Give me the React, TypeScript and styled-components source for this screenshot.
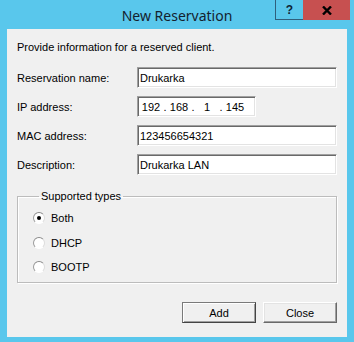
import React from "react";
import styled, { createGlobalStyle } from "styled-components";

const GlobalStyle = createGlobalStyle`
    html, body {
        margin: 0;
        padding: 0;
        background: #59c7ec;
    }
`;

const Window = styled.div`
    display: flex;
    flex-direction: column;
    width: 354px;
    height: 342px;
    background: #59c7ec;
    font-family: "Liberation Sans", Arial, sans-serif;
    font-size: 11px;
    color: #000;
`;

const TitleBar = styled.div`
    display: grid;
    grid-template-columns: 1fr auto 1fr;
    height: 29px;
`;

const Title = styled.div`
    grid-column: 2;
    align-self: center;
    padding-top: 1px;
    font-family: "Noto Sans", "Open Sans", sans-serif;
    font-size: 14px;
    color: #14222f;
`;

const Controls = styled.div`
    grid-column: 3;
    justify-self: end;
    display: flex;
    height: 20px;
    margin-right: 4px;
`;

const HelpButton = styled.div`
    display: flex;
    align-items: center;
    justify-content: center;
    width: 27px;
    border: 1px solid #2f5f7c;
    border-top: none;
    border-right: none;
    font-weight: bold;
    font-size: 12px;
    color: #0e2436;
`;

const CloseButton = styled.div`
    display: flex;
    align-items: center;
    justify-content: center;
    width: 47px;
    background: #c75050;
`;

const Client = styled.div`
    display: flex;
    flex-direction: column;
    flex: 1;
    margin: 0 7px 5px 7px;
    padding: 12px 10px 0 10px;
    background: #f0f0f0;
`;

const Intro = styled.div`
    line-height: 13px;
`;

const Fields = styled.div`
    display: grid;
    grid-template-columns: 120px 1fr;
    row-gap: 8px;
    margin-top: 13px;
`;

const Label = styled.div`
    display: flex;
    align-items: center;
    height: 21px;
`;

const Input = styled.div<{ $width?: number }>`
    display: flex;
    align-items: center;
    box-sizing: border-box;
    width: ${(p) => (p.$width ? `${p.$width}px` : "100%")};
    height: 21px;
    padding-left: 2px;
    background: #fff;
    border: 1px solid;
    border-color: #a0a0a0 #fff #fff #a0a0a0;
    box-shadow: inset 1px 1px 0 #696969, inset -1px -1px 0 #e3e3e3;
`;

const Octet = styled.span`
    width: 22px;
    text-align: center;
`;

const Dot = styled.span`
    width: 6px;
    text-align: center;
`;

const GroupBox = styled.fieldset`
    margin: 15px 0 0 0;
    padding: 7px 0 7px 15px;
    border: 1px solid #bcbcbc;
    box-shadow: 1px 1px 0 #fff, inset 1px 1px 0 #fff;
    display: flex;
    flex-direction: column;
    gap: 8.5px;
`;

const Legend = styled.legend`
    margin-left: 6px;
    padding: 0 2px;
    line-height: 13px;
`;

const RadioRow = styled.label`
    display: flex;
    align-items: center;
    gap: 6px;
    height: 16px;
`;

const RadioCircle = styled.span<{ $checked?: boolean }>`
    display: flex;
    align-items: center;
    justify-content: center;
    box-sizing: border-box;
    width: 12px;
    height: 12px;
    border-radius: 50%;
    border: 1px solid;
    border-color: #8a8a8a #dcdcdc #ffffff #9a9a9a;
    background: #fff;

    &::after {
        content: "";
        display: ${(p) => (p.$checked ? "block" : "none")};
        width: 4px;
        height: 4px;
        border-radius: 50%;
        background: #000;
    }
`;

const ButtonRow = styled.div`
    display: flex;
    justify-content: flex-end;
    gap: 7px;
    margin-top: 19px;
`;

const Button = styled.button<{ $default?: boolean }>`
    box-sizing: border-box;
    width: 74px;
    height: 21px;
    padding: 0;
    font-family: "Liberation Sans", Arial, sans-serif;
    font-size: 11px;
    color: #000;
    background: #f0f0f0;
    border: 1px solid;
    border-color: ${(p) => (p.$default ? "#7a7a7a #444 #444 #7a7a7a" : "#fff #696969 #696969 #fff")};
    box-shadow: ${(p) =>
        p.$default
            ? "inset 1px 1px 0 #fff, inset -1px -1px 0 #a0a0a0"
            : "inset -1px -1px 0 #a0a0a0, inset 1px 1px 0 #e3e3e3"};
`;

const types = ["Both", "DHCP", "BOOTP"];

const App: React.FC = () => {
    return (
        <Window>
            <GlobalStyle />
            <TitleBar>
                <Title>New Reservation</Title>
                <Controls>
                    <HelpButton>?</HelpButton>
                    <CloseButton>
                        <svg width="10" height="9" viewBox="0 0 10 9">
                            <path d="M1 0.5 L9 8.5 M9 0.5 L1 8.5" stroke="#000" strokeWidth="2.4" />
                        </svg>
                    </CloseButton>
                </Controls>
            </TitleBar>
            <Client>
                <Intro>Provide information for a reserved client.</Intro>
                <Fields>
                    <Label>Reservation name:</Label>
                    <Input>Drukarka</Input>
                    <Label>IP address:</Label>
                    <Input $width={119}>
                        <Octet>192</Octet>
                        <Dot>.</Dot>
                        <Octet>168</Octet>
                        <Dot>.</Dot>
                        <Octet>1</Octet>
                        <Dot>.</Dot>
                        <Octet>145</Octet>
                    </Input>
                    <Label>MAC address:</Label>
                    <Input>123456654321</Input>
                    <Label>Description:</Label>
                    <Input>Drukarka LAN</Input>
                </Fields>
                <GroupBox>
                    <Legend>Supported types</Legend>
                    {types.map((t, i) => (
                        <RadioRow key={t}>
                            <RadioCircle $checked={i === 0} />
                            {t}
                        </RadioRow>
                    ))}
                </GroupBox>
                <ButtonRow>
                    <Button $default>Add</Button>
                    <Button>Close</Button>
                </ButtonRow>
            </Client>
        </Window>
    );
};

export default App;
